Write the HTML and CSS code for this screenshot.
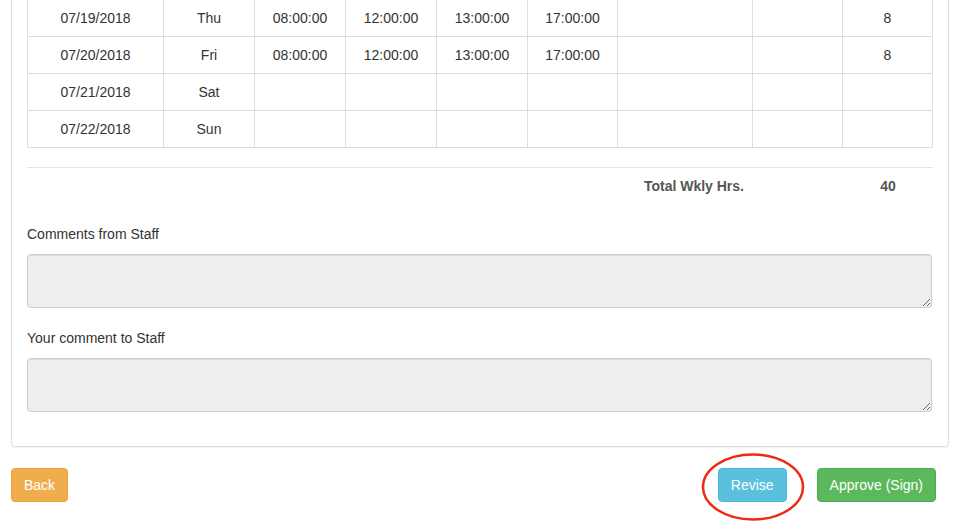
FILE: index.html
```html
<!DOCTYPE html>
<html>
<head>
<meta charset="utf-8">
<link rel="stylesheet" href="styles.css">
</head>
<body>
<div class="page">
  <div class="panel">
    <table class="hours">
      <colgroup>
        <col style="width:136px"><col style="width:91px"><col style="width:91px"><col style="width:91px"><col style="width:91px"><col style="width:90px"><col style="width:135px"><col style="width:90px"><col style="width:90px">
      </colgroup>
      <tbody>
        <tr><td>07/19/2018</td><td>Thu</td><td>08:00:00</td><td>12:00:00</td><td>13:00:00</td><td>17:00:00</td><td></td><td></td><td>8</td></tr>
        <tr><td>07/20/2018</td><td>Fri</td><td>08:00:00</td><td>12:00:00</td><td>13:00:00</td><td>17:00:00</td><td></td><td></td><td>8</td></tr>
        <tr><td>07/21/2018</td><td>Sat</td><td></td><td></td><td></td><td></td><td></td><td></td><td></td></tr>
        <tr><td>07/22/2018</td><td>Sun</td><td></td><td></td><td></td><td></td><td></td><td></td><td></td></tr>
      </tbody>
    </table>
    <hr class="divider">
    <div class="total-row">
      <span class="total-label">Total Wkly Hrs.</span>
      <span class="total-value">40</span>
    </div>
    <div class="form-group first">
      <label class="field-label">Comments from Staff</label>
      <textarea class="field" rows="2" readonly></textarea>
    </div>
    <div class="form-group">
      <label class="field-label">Your comment to Staff</label>
      <textarea class="field" rows="2" readonly></textarea>
    </div>
  </div>
  <div class="actions">
    <button class="btn btn-warning">Back</button>
    <div class="right-actions">
      <div class="circled">
        <button class="btn btn-info">Revise</button>
        <svg class="ring" width="106" height="70" viewBox="0 0 106 70"><ellipse cx="53" cy="35" rx="50" ry="32.5" fill="none" stroke="#ee2a12" stroke-width="2.6"/></svg>
      </div>
      <button class="btn btn-success">Approve (Sign)</button>
    </div>
  </div>
</div>
</body>
</html>
```

FILE: styles.css
```css
html, body {
  margin: 0;
  padding: 0;
  background: #fff;
}
body {
  font-family: "Liberation Sans", Arial, Helvetica, sans-serif;
  font-size: 14px;
  line-height: 20px;
  color: #333;
}
.page {
  width: 938px;
  margin-left: 11px;
  padding-bottom: 24px;
}
.panel {
  margin-top: -17px;
  border: 1px solid #ddd;
  border-radius: 4px;
  box-shadow: 0 1px 1px rgba(0,0,0,0.05);
  padding: 15px 15px 34px;
}
.hours {
  width: 905px;
  border-collapse: collapse;
  table-layout: fixed;
  border: 1px solid #ddd;
}
.hours td {
  border: 1px solid #ddd;
  padding: 8px;
  height: 20px;
  text-align: center;
  vertical-align: top;
}
.divider {
  margin: 19px 0 8px;
  border: 0;
  border-top: 1px solid #e3e3e3;
  height: 0;
}
.total-row {
  display: flex;
  justify-content: flex-end;
  font-weight: bold;
  height: 20px;
}
.total-label {
  width: 170px;
  padding-right: 99px;
  text-align: right;
  color: #555;
}
.total-value {
  width: 90px;
  text-align: center;
  color: #555;
}
.form-group {
  display: flex;
  flex-direction: column;
  margin-top: 20px;
}
.form-group.first {
  margin-top: 28px;
}
.field-label {
  margin-bottom: 10px;
  font-weight: normal;
}
.field {
  display: block;
  box-sizing: border-box;
  width: 905px;
  height: 54px;
  padding: 6px 12px;
  margin: 0;
  font-family: inherit;
  font-size: 14px;
  line-height: 20px;
  background: #eee;
  border: 1px solid #ccc;
  border-radius: 4px;
  box-shadow: inset 0 1px 1px rgba(0,0,0,0.075);
  outline: none;
  resize: vertical;
}
.actions {
  display: flex;
  justify-content: space-between;
  align-items: center;
  margin-top: 21px;
}
.right-actions {
  display: flex;
  align-items: center;
  gap: 30px;
  margin-right: 13px;
}
.circled {
  position: relative;
  display: flex;
}
.ring {
  position: absolute;
  left: -18px;
  top: -16px;
  pointer-events: none;
}
.btn {
  font-family: inherit;
  font-size: 14px;
  line-height: 20px;
  padding: 6px 12px;
  border: 1px solid transparent;
  border-radius: 4px;
  color: #fff;
  margin: 0;
  cursor: pointer;
}
.btn-warning {
  background: #f0ad4e;
  border-color: #eea236;
}
.btn-info {
  background: #5bc0de;
  border-color: #46b8da;
}
.btn-success {
  background: #5cb85c;
  border-color: #4cae4c;
}
```
